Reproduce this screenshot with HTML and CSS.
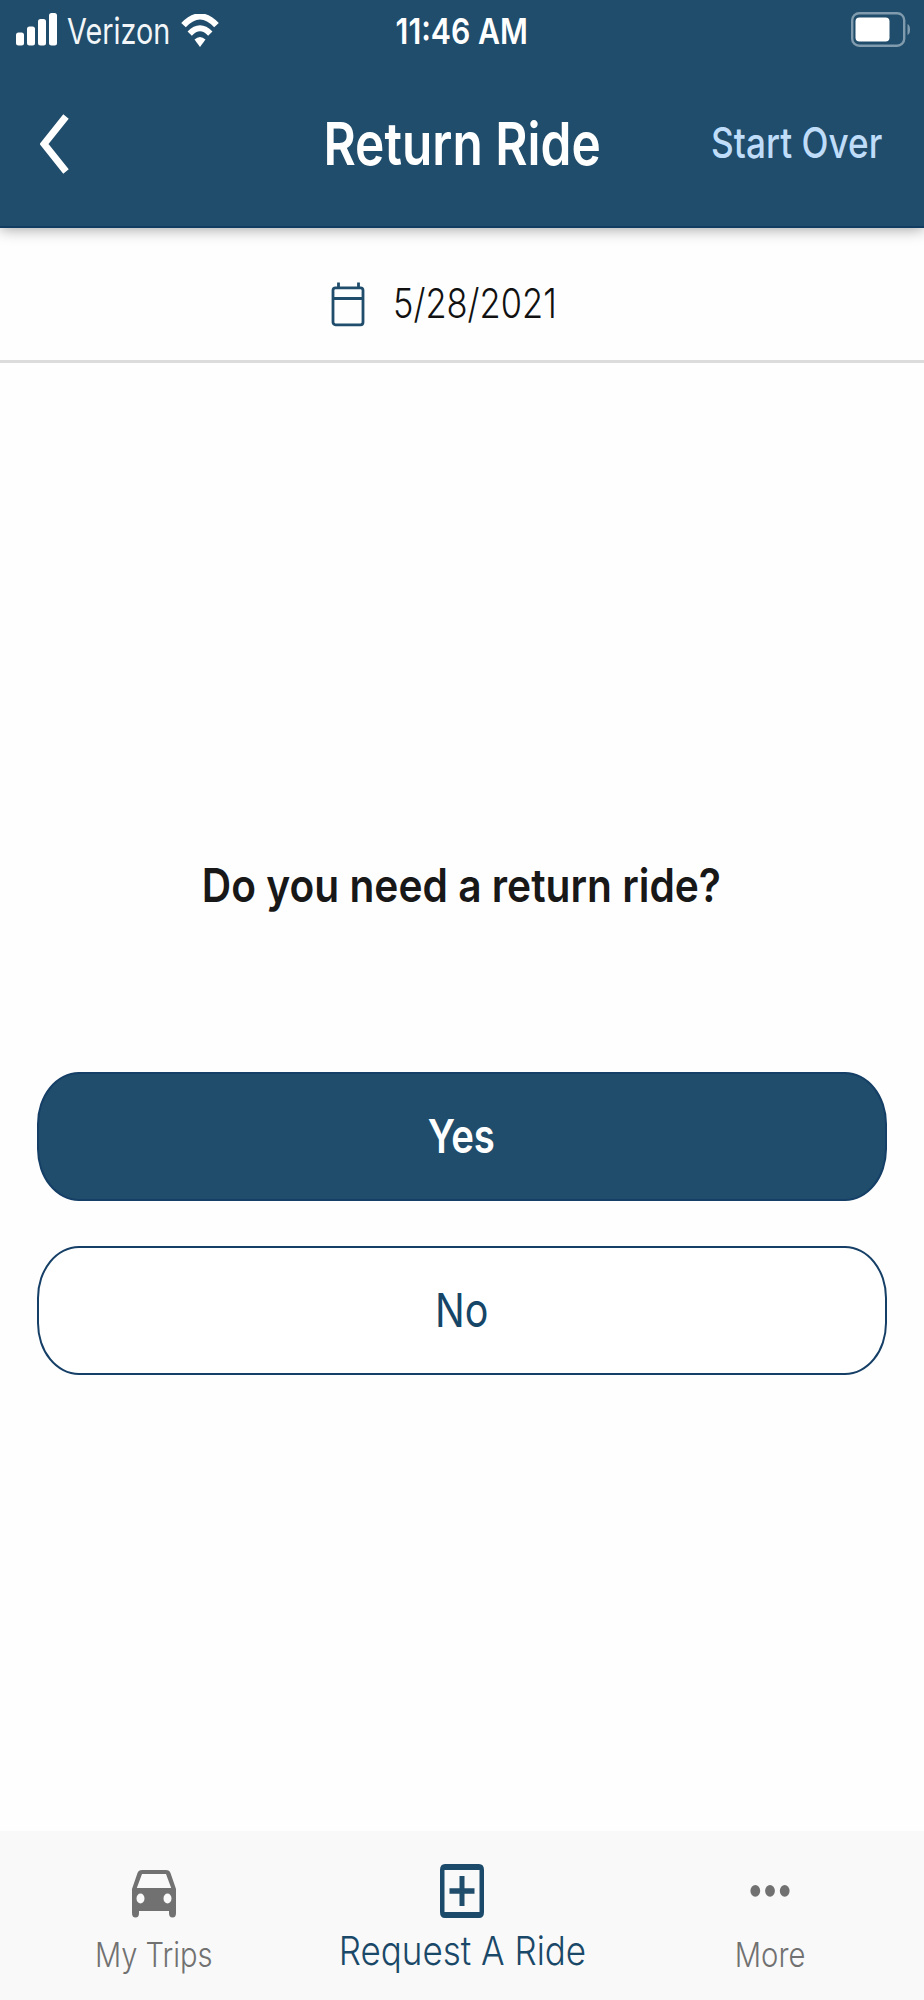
FILE: index.html
```html
<!DOCTYPE html>
<html lang="en">
<head>
<meta charset="utf-8">
<title>Return Ride</title>
<link rel="stylesheet" href="styles.css">
</head>
<body>
<div class="screen">
  <header class="header">
    <div class="status">
      <div class="carrier">
        <svg class="signal" width="42" height="33" viewBox="0 0 42 33" fill="#fff"><rect x="0" y="19.500" width="8" height="13" rx="2.500"/><rect x="11" y="13.500" width="8" height="19" rx="2.500"/><rect x="22" y="6" width="8" height="26.500" rx="2.500"/><rect x="33" y="0" width="8" height="32.500" rx="2.500"/></svg>
        <span class="carrier-name">Verizon</span>
        <svg class="wifi" width="38" height="34" viewBox="0 0 38 34"><path d="M2.500 11.200Q19-6.300 35.500 11.200" fill="none" stroke="#fff" stroke-width="6.300"/><path d="M8.700 19.700Q19 9 29.300 19.700" fill="none" stroke="#fff" stroke-width="6"/><path d="M13.500 25.500Q19 20.500 24.500 25.500L19 33Z" fill="#fff"/></svg>
      </div>
      <span class="clock">11:46 AM</span>
      <svg class="battery" width="60" height="35" viewBox="0 0 60 35"><rect x="1.200" y="1.200" width="52" height="32.500" rx="7" fill="none" stroke="#7f9bad" stroke-width="2.400"/><rect x="4.500" y="5.500" width="34" height="24" rx="4" fill="#fff"/><path d="M56.500 12Q59 13 59 17.500T56.500 23Z" fill="#7f9bad"/></svg>
    </div>
    <nav class="nav">
      <svg class="back" width="32" height="62" viewBox="0 0 32 62"><path d="M26 3.500L4 31L26 58.500" fill="none" stroke="#fff" stroke-width="7"/></svg>
      <h1 class="title">Return Ride</h1>
      <span class="start-over">Start Over</span>
    </nav>
  </header>
  <section class="date-row">
    <svg class="calendar" width="34" height="46" viewBox="0 0 34 46" fill="none" stroke="#1f4d6b" stroke-width="2.800"><rect x="2" y="6.800" width="30" height="37" rx="2.500"/><path d="M2 17.500H32M7.500 1.500V7M27.500 1.500V7"/></svg>
    <span class="date">5/28/2021</span>
  </section>
  <main class="main">
    <p class="question">Do you need a return ride?</p>
    <button class="btn btn-yes"><span class="yes">Yes</span></button>
    <button class="btn btn-no"><span class="no">No</span></button>
  </main>
  <footer class="tabs">
    <div class="tab">
      <svg class="icon" width="44" height="54" viewBox="0 0 44 54"><path fill="#717171" fill-rule="evenodd" d="M10 6H34Q37.500 6 38.500 9L44 25V49Q44 53.500 40.500 53.500T37 49V47H7V49Q7 53.500 3.500 53.500T0 49V25L5.500 9Q6.500 6 10 6ZM10 10L4.800 24H39.200L34 10ZM8.500 29.500A4 5 0 1 0 8.500 39.500A4 5 0 1 0 8.500 29.500ZM35.500 29.500A4 5 0 1 0 35.500 39.500A4 5 0 1 0 35.500 29.500Z"/></svg>
      <span class="label trips">My Trips</span>
    </div>
    <div class="tab active">
      <svg class="icon" width="44" height="54" viewBox="0 0 44 54"><path fill="#1b4a6b" fill-rule="evenodd" d="M5 0H39Q44 0 44 6V48Q44 54 39 54H5Q0 54 0 48V6Q0 0 5 0ZM4.500 6V48H39.500V6Z"/><path fill="#1f4d6b" d="M19.500 12H24.500V24.300H34.500V29.700H24.500V42H19.500V29.700H9.500V24.300H19.500Z"/></svg>
      <span class="label request">Request A Ride</span>
    </div>
    <div class="tab">
      <svg class="icon" width="44" height="54" viewBox="0 0 44 54" fill="#717171"><ellipse cx="7.300" cy="26.800" rx="4.900" ry="5.900"/><ellipse cx="22" cy="26.800" rx="4.900" ry="5.900"/><ellipse cx="36.700" cy="26.800" rx="4.900" ry="5.900"/></svg>
      <span class="label more">More</span>
    </div>
  </footer>
</div>
</body>
</html>
```
FILE: styles.css
```css
* { box-sizing: border-box; }
body { margin: 0; font-family: Inter, "Liberation Sans", sans-serif; background: #fefefe; }
svg { display: block; flex: none; }
span, h1, p { display: block; margin: 0; white-space: nowrap; }
.screen { display: flex; flex-direction: column; height: 2000px; overflow: hidden; }

.header { height: 228px; background: #204d6b; border-bottom: 2px solid #123d63; box-shadow: 0 1px 14px rgba(0, 0, 0, .38); z-index: 1; color: #fff; }
.status, .nav { display: grid; grid-template-columns: 1fr auto 1fr; align-items: center; }
.status { height: 62px; padding: 0 13px; }
.carrier { display: flex; align-items: center; padding-left: 3px; }
.signal { margin-top: -3px; }
.carrier-name { width: 123px; margin-left: 9px; font-size: 36px; font-weight: 400; transform: scaleX(.8); transform-origin: left; color: #f2f6f8; }
.wifi { margin: -1px 0 0 -9px; }
.clock { font-size: 36px; font-weight: 600; transform: scaleX(.84); }
.battery { justify-self: end; margin-top: -3px; }
.nav { height: 164px; padding: 0 40px; }
.title { margin-top: -1px; font-size: 59px; font-weight: 600; transform: scaleX(.84); }
.start-over { justify-self: end; margin: -3px 2px 0 0; font-size: 42px; font-weight: 500; color: #bfdcf9; transform: scaleX(.838); transform-origin: right; }

.date-row { display: flex; justify-content: flex-start; align-items: center; height: 135px; padding: 18px 0 0 331px; border-bottom: 3px solid #dcdcdc; }
.calendar { margin-top: 2px; }
.date { margin-left: 28px; font-size: 41px; font-weight: 300; color: #111; transform: scaleX(.84); transform-origin: left; }

.main { flex: 1; display: flex; flex-direction: column; align-items: center; padding: 492px 37px 0; }
.question { line-height: 60px; margin-bottom: 157px; padding-right: 2px; font-size: 46px; font-weight: 600; color: #181818; transform: scaleX(.885); }
.btn { display: flex; align-items: center; justify-content: center; width: 850px; height: 129px; padding: 0 0 2px; border: 2px solid #153f66; border-radius: 42px / 52px; font: inherit; font-size: 47px; }
.btn-yes { padding-right: 2px; background: #204d6b; color: #fff; font-weight: 600; }
.btn-no { margin-top: 45px; background: #fff; color: #164667; font-weight: 400; }
.yes { transform: scaleX(.815); }
.no { transform: scaleX(.84); }

.tabs { display: grid; grid-template-columns: repeat(3, 1fr); height: 169px; background: #f9f9f9; color: #717171; }
.tab { display: flex; flex-direction: column; align-items: center; padding-top: 33px; }
.active { color: #1a4868; }
.label { line-height: 40px; margin-top: 17px; font-size: 34px; font-weight: 300; transform: scaleX(.855); }
.request { margin-top: 13px; font-size: 40px; transform: scaleX(.875); }
.more { transform: scaleX(.86); }
```
